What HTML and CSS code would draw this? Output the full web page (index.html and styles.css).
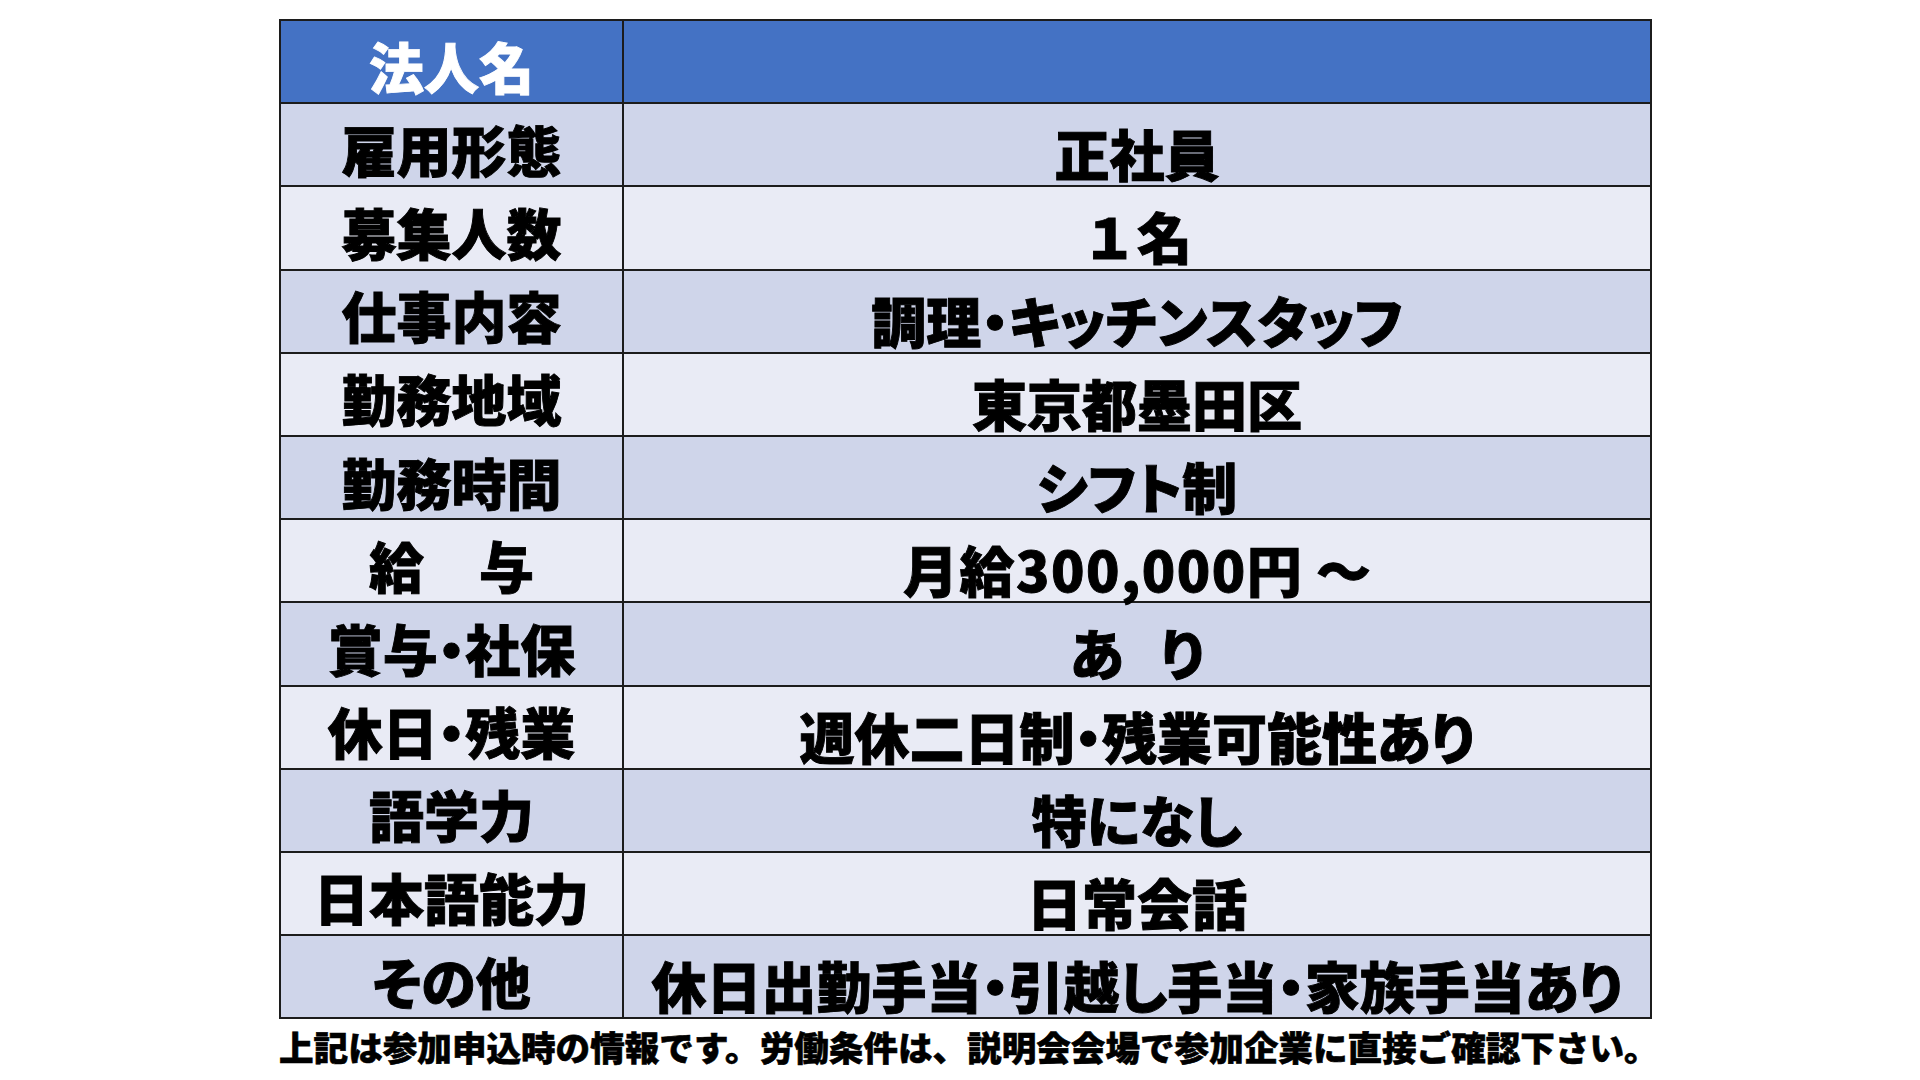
FILE: index.html
```html
<!DOCTYPE html>
<html lang="ja">
<head>
<meta charset="utf-8">
<title>求人情報</title>
<link rel="stylesheet" href="styles.css">
</head>
<body>
<main class="page">
  <table class="job">
    <tr class="head">
      <th class="label">法人名</th>
      <td class="value"></td>
    </tr>
    <tr class="dark">
      <th class="label">雇用形態</th>
      <td class="value">正社員</td>
    </tr>
    <tr class="light">
      <th class="label">募集人数</th>
      <td class="value fullwidth">１名</td>
    </tr>
    <tr class="dark">
      <th class="label">仕事内容</th>
      <td class="value">調理・キッチンスタッフ</td>
    </tr>
    <tr class="light">
      <th class="label">勤務地域</th>
      <td class="value">東京都墨田区</td>
    </tr>
    <tr class="dark">
      <th class="label">勤務時間</th>
      <td class="value">シフト制</td>
    </tr>
    <tr class="light">
      <th class="label">給　与</th>
      <td class="value"><span class="money">月給300,000円</span> ～</td>
    </tr>
    <tr class="dark">
      <th class="label">賞与・社保</th>
      <td class="value spaced">あ り</td>
    </tr>
    <tr class="light">
      <th class="label">休日・残業</th>
      <td class="value">週休二日制・残業可能性あり</td>
    </tr>
    <tr class="dark">
      <th class="label">語学力</th>
      <td class="value">特になし</td>
    </tr>
    <tr class="light">
      <th class="label">日本語能力</th>
      <td class="value">日常会話</td>
    </tr>
    <tr class="dark">
      <th class="label">その他</th>
      <td class="value">休日出勤手当・引越し手当・家族手当あり</td>
    </tr>
  </table>
  <p class="note">上記は参加申込時の情報です。労働条件は、説明会会場で参加企業に直接ご確認下さい。</p>
</main>
</body>
</html>
```

FILE: styles.css
```css
html, body {
  margin: 0;
  padding: 0;
  background: #ffffff;
}

body {
  font-family: "Noto Sans CJK JP", "Noto Sans", sans-serif;
  color: #000000;
}

.page {
  width: 1920px;
  height: 1080px;
  padding: 19px 0 0 279px;
  box-sizing: border-box;
}

.job {
  border-collapse: collapse;
  width: 1373px;
  table-layout: fixed;
}

.job tr {
  height: 83.2px;
}

.job th,
.job td {
  border: 2px solid #1c1c1c;
  padding: 7px 0 0 0;
  text-align: center;
  vertical-align: middle;
  font-size: 55px;
  font-weight: 900;
  line-height: 1;
  white-space: nowrap;
  font-feature-settings: "palt";
  -webkit-text-stroke: 0.9px currentColor;
}

.job .label {
  width: 341px;
}

.job .value {
  padding-top: 16px;
}

.job .fullwidth {
  font-feature-settings: normal;
}

.job .spaced {
  word-spacing: 24px;
}

.money {
  letter-spacing: 1.5px;
}

.head th,
.head td {
  background: #4472c4;
  color: #ffffff;
}

.dark th,
.dark td {
  background: #cfd5ea;
}

.light th,
.light td {
  background: #e9ebf5;
}

.note {
  margin: 3px 0 0 0;
  font-size: 34.6px;
  font-weight: 900;
  line-height: 1.4;
  white-space: nowrap;
  -webkit-text-stroke: 0.6px currentColor;
}
```
